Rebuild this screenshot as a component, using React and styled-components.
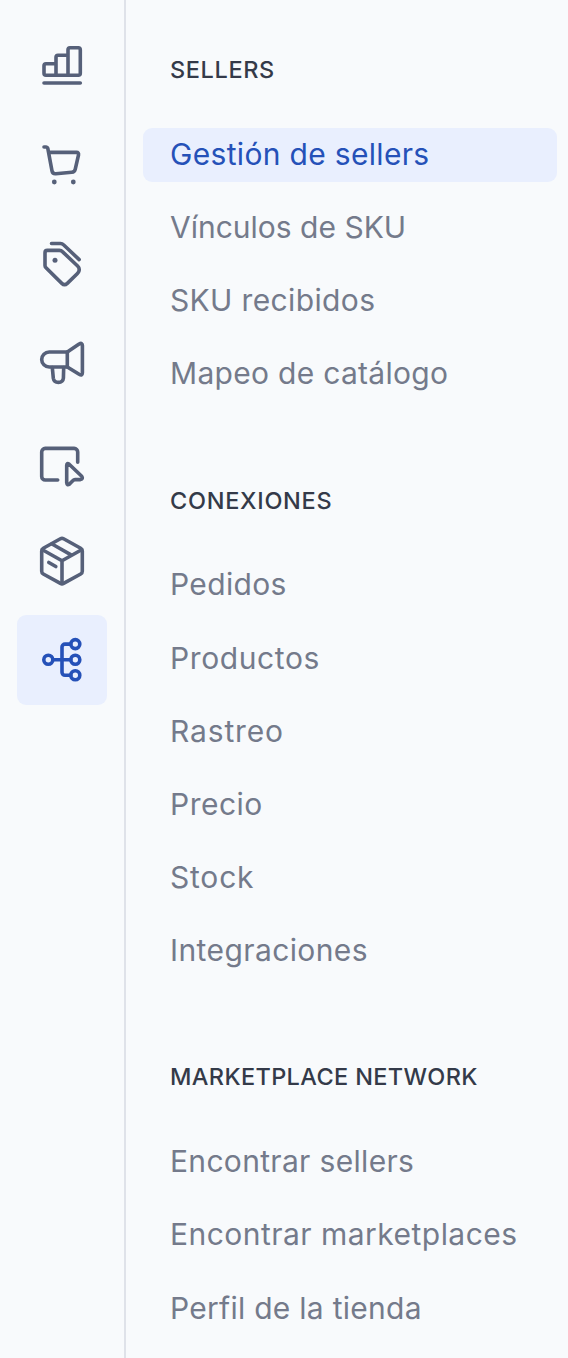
import React from "react";
import styled, { createGlobalStyle } from "styled-components";

const GlobalStyle = createGlobalStyle`
  * { box-sizing: border-box; }
  body { margin: 0; background: #f8fafc; font-family: Inter, "Liberation Sans", sans-serif; }
`;

const Layout = styled.div`
  display: flex;
  width: 568px;
  height: 1358px;
  overflow: hidden;
  background: #f8fafc;
`;

const Rail = styled.nav`
  flex: none;
  display: flex;
  flex-direction: column;
  align-items: center;
  gap: 9px;
  width: 126px;
  padding: 21px 0 0 0;
  border-right: 2px solid #dfe2e9;
`;

const RailButton = styled.button`
  display: flex;
  align-items: center;
  justify-content: center;
  width: 90px;
  height: 90px;
  padding: 0;
  border: 0;
  border-radius: 9px;
  background: ${(p) => (p.$active ? "#e9effe" : "transparent")};
  color: ${(p) => (p.$active ? "#2551b8" : "#566079")};
`;

const Glyph = styled.svg`
  width: 54px;
  height: 54px;
  overflow: visible;
  fill: none;
  stroke: currentColor;
  stroke-width: 3.6px;
  stroke-linecap: round;
  stroke-linejoin: round;
`;

const Dot = styled.circle`
  fill: currentColor;
  stroke: none;
`;

const Menu = styled.main`
  flex: 1;
  display: flex;
  flex-direction: column;
  gap: 84.2px;
  padding: 55px 11px 0 17px;
`;

const Group = styled.section`
  display: flex;
  flex-direction: column;
`;

const Heading = styled.h2`
  margin: 0 0 42.8px;
  padding-left: 27px;
  font-size: 23.5px;
  font-weight: 500;
  line-height: 30px;
  letter-spacing: ${(p) => p.$tracking || 0}px;
  white-space: nowrap;
  color: #343a49;
`;

const Items = styled.div`
  display: flex;
  flex-direction: column;
  gap: 19.2px;
`;

const Item = styled.a`
  display: block;
  height: 54px;
  padding-left: 27px;
  border-radius: 9px;
  font-size: 30px;
  line-height: 52px;
  letter-spacing: ${(p) => p.$tracking || 0}px;
  white-space: nowrap;
  background: ${(p) => (p.$active ? "#e9effe" : "transparent")};
  color: ${(p) => (p.$active ? "#2551b8" : "#747a8b")};
`;

const icons = [
  {
    label: "Estadísticas",
    art: (
      <>
        <path d="M21 36.3H11a2 2 0 0 1-2-2V26.7a2 2 0 0 1 2-2H21M21 36.3V18.3a2 2 0 0 1 2-2H33M33 36.3V10.7a2 2 0 0 1 2-2H43.3a2 2 0 0 1 2 2V34.3a2 2 0 0 1-2 2H21" />
        <path d="M9 44H45.3" />
      </>
    ),
  },
  {
    label: "Ventas",
    art: (
      <>
        <path d="M9 9H11.2Q12.4 9 12.8 10.3L17 32.8Q17.6 36 20.8 35.7L36.8 34.3Q39.6 34 40.2 31.3L43.5 17Q44 14.4 41.5 14.4H14" />
        <Dot cx="19.3" cy="44" r="2.4" />
        <Dot cx="38.3" cy="44" r="2.4" />
      </>
    ),
  },
  {
    label: "Precios",
    art: (
      <>
        <path d="M12.3 13.4H24.5Q26.2 13.4 27.4 14.6L42.6 29Q45.4 31.8 43.4 35.3Q42.9 36 42.2 36.7L32.3 46.4Q29.5 49 26.8 46.4L11 30.8Q10 29.8 10 28.4V15.7Q10 13.4 12.3 13.4Z" />
        <path d="M16.5 6.5H25.5Q27.3 6.5 28.5 7.7L44.2 22.6" />
        <Dot cx="20" cy="23.3" r="2.5" />
      </>
    ),
  },
  {
    label: "Publicidad",
    art: (
      <>
        <path d="M32.3 16H14.2a7.5 7.5 0 0 0 0 15H32.3Z" />
        <path d="M32.3 16L44.1 8Q47.4 6.2 47.4 9.6V36.7Q47.4 40.2 44.1 38.3L32.3 31" />
        <path d="M17.3 31.5L18.3 42.2Q19 46.4 23.4 46.4Q28 46.4 28.4 42.2L28.7 31.5" />
      </>
    ),
  },
  {
    label: "Tienda",
    art: (
      <>
        <path d="M22.7 45H10.2a3.5 3.5 0 0 1-3.5-3.5V16.9a3.5 3.5 0 0 1 3.5-3.5H39.2a3.5 3.5 0 0 1 3.5 3.5V27.3" />
        <path d="M31.7 30.4Q31.8 27.4 34.2 29.2L46.7 41.3Q48.5 43.9 45.4 44.6H40Q38.8 44.6 38 45.5L34.5 49.1Q31.9 50.7 31.7 47.7Z" />
      </>
    ),
  },
  {
    label: "Envíos",
    art: (
      <g transform="translate(0 0.5)">
        <path d="M25.4 4.3Q27 3.4 28.6 4.3L45.7 13.8Q47.3 14.7 47.3 16.6V36.7Q47.3 38.6 45.7 39.5L28.6 48.9Q27 49.8 25.4 48.9L8.3 39.5Q6.7 38.6 6.7 36.7V16.6Q6.7 14.7 8.3 13.8Z" />
        <path d="M7.4 15.2L27 26.2L46.6 15.2M27 26.2V49M17 9.5L36.5 20.6M13.8 28L20.8 32" />
      </g>
    ),
  },
  {
    label: "Conexiones",
    active: true,
    art: (
      <>
        <circle cx="13.3" cy="26.7" r="4.5" />
        <circle cx="40.3" cy="11.1" r="4.5" />
        <circle cx="40.3" cy="26.7" r="4.5" />
        <circle cx="40.3" cy="42.3" r="4.5" />
        <path d="M17.8 26.7H35.8M35.8 11.1H30a3 3 0 0 0-3 3V39.3a3 3 0 0 0 3 3H35.8" />
      </>
    ),
  },
];

const groups = [
  {
    title: "SELLERS",
    tracking: 0.62,
    items: [
      { text: "Gestión de sellers", active: true, tracking: 0.32 },
      { text: "Vínculos de SKU" },
      { text: "SKU recibidos", tracking: 0.36 },
      { text: "Mapeo de catálogo", tracking: 0.3 },
    ],
  },
  {
    title: "CONEXIONES",
    tracking: 0.72,
    items: [
      { text: "Pedidos", tracking: 0.35 },
      { text: "Productos", tracking: 0.6 },
      { text: "Rastreo", tracking: 0.85 },
      { text: "Precio", tracking: 0.5 },
      { text: "Stock", tracking: 0.8 },
      { text: "Integraciones", tracking: 0.4 },
    ],
  },
  {
    title: "MARKETPLACE NETWORK",
    tracking: 0.36,
    items: [
      { text: "Encontrar sellers", tracking: 0.32 },
      { text: "Encontrar marketplaces", tracking: 0.47 },
      { text: "Perfil de la tienda", tracking: 0.27 },
    ],
  },
];

export default function App() {
  return (
    <>
      <GlobalStyle />
      <Layout>
        <Rail>
          {icons.map((icon) => (
            <RailButton key={icon.label} aria-label={icon.label} $active={icon.active}>
              <Glyph viewBox="0 0 54 54">{icon.art}</Glyph>
            </RailButton>
          ))}
        </Rail>
        <Menu>
          {groups.map((group) => (
            <Group key={group.title}>
              <Heading $tracking={group.tracking}>{group.title}</Heading>
              <Items>
                {group.items.map((item) => (
                  <Item key={item.text} $active={item.active} $tracking={item.tracking}>
                    {item.text}
                  </Item>
                ))}
              </Items>
            </Group>
          ))}
        </Menu>
      </Layout>
    </>
  );
}
